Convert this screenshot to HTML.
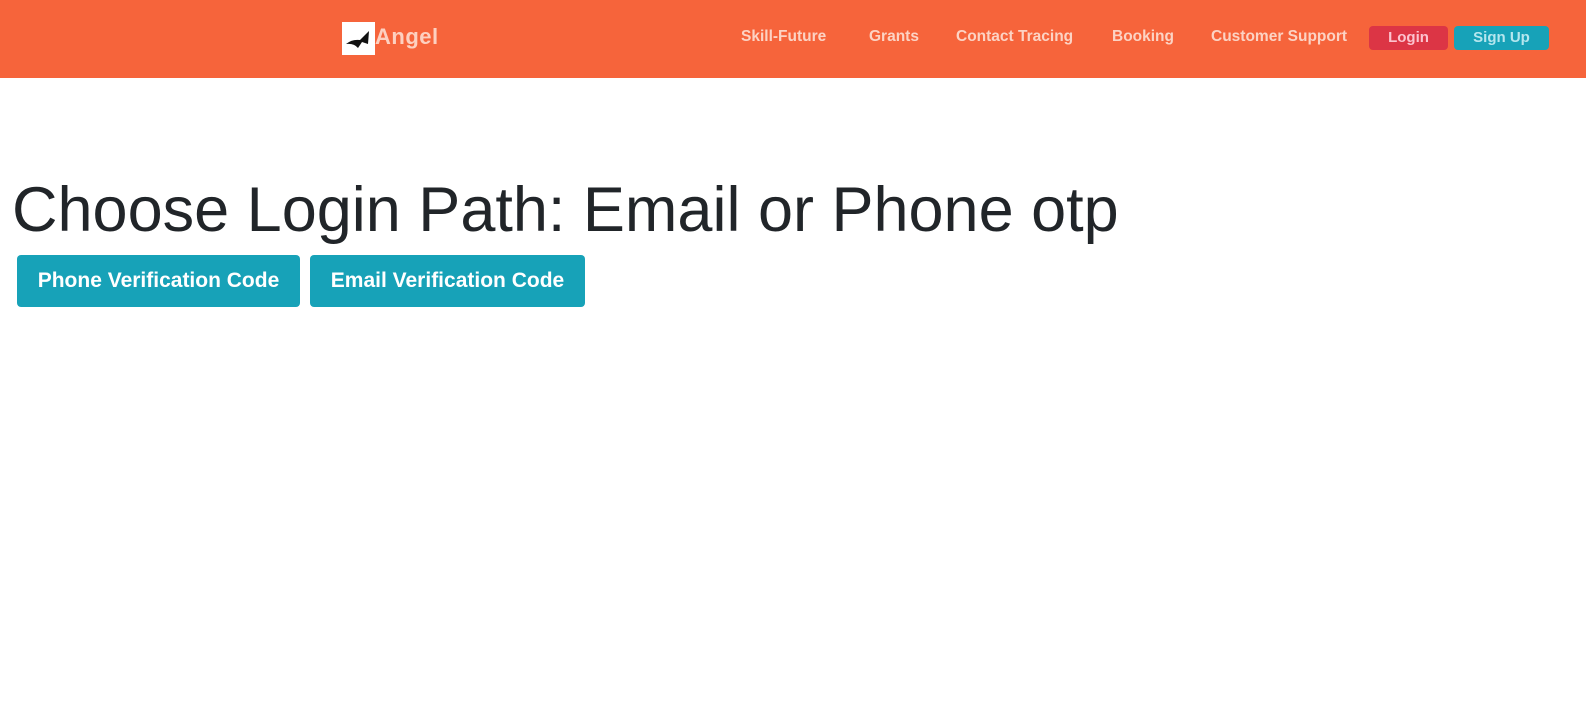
<!DOCTYPE html>
<html><head><style>
body{margin:0;font-family:"Liberation Sans",sans-serif;background:#fff;}
.nav{height:78px;background:#f6643b;position:relative;}
.logo{position:absolute;left:342px;top:22px;width:33px;height:33px;background:#fff;}
.brand{position:absolute;left:375px;top:24px;font-size:22px;font-weight:bold;color:#fdd0c0;letter-spacing:0.5px;}
.links a{position:absolute;top:28px;font-size:15.5px;font-weight:bold;color:#fcd3c4;white-space:nowrap;}
.btn{position:absolute;top:26px;height:24px;border-radius:4px;color:#fcc3cf;font-weight:bold;font-size:15px;text-align:center;line-height:24px;}
h1{position:absolute;left:12px;top:176px;margin:0;font-weight:normal;font-size:63px;color:#212529;letter-spacing:0;white-space:nowrap;line-height:1.1;}
.b{position:absolute;top:255px;height:52px;background:#17a2b8;border-radius:4px;color:#fff;font-size:21px;font-weight:bold;line-height:52px;text-align:center;letter-spacing:0;}
</style></head><body>
<div class="nav">
<div class="logo"><svg width="33" height="33"><path d="M4 22 Q10 17 18 18 L27 9 L26 22 L20 20 L16 26 Q12 21 4 22Z" fill="#111"/></svg></div>
<div class="brand">Angel</div>
<div class="links">
<a style="left:741px">Skill-Future</a>
<a style="left:869px">Grants</a>
<a style="left:956px">Contact Tracing</a>
<a style="left:1112px">Booking</a>
<a style="left:1211px">Customer Support</a>
</div>
<div class="btn" style="left:1369px;width:79px;background:#dc3545">Login</div>
<div class="btn" style="left:1454px;width:95px;background:#17a2b8;color:#b6e6ee">Sign Up</div>
</div>
<h1>Choose Login Path: Email or Phone otp</h1>
<div class="b" style="left:17px;width:283px">Phone Verification Code</div>
<div class="b" style="left:310px;width:275px">Email Verification Code</div>
</body></html>
